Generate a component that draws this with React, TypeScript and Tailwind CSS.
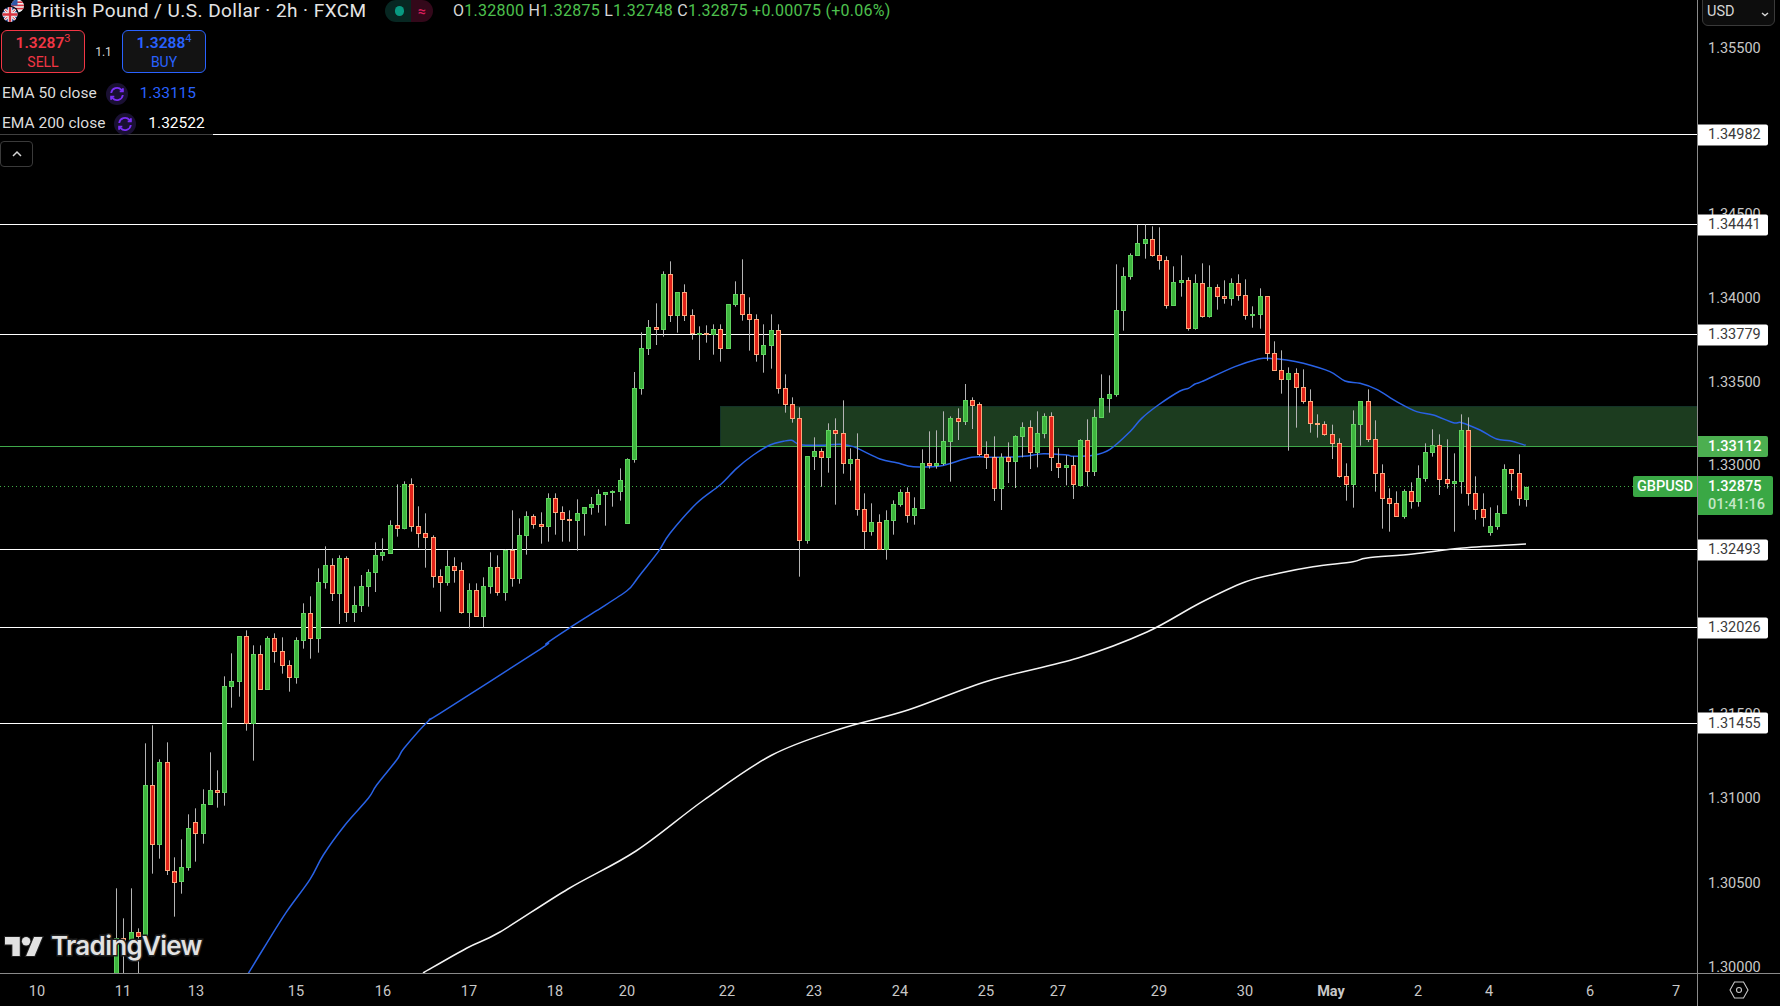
import React from 'react';

// candle rows were read off 3x crops: [x, color, wickTop, bodyTop, bodyBottom, wickBottom]
type Row = [number, 'g' | 'r', number, number, number, number];
type Candle = { x: number; up: boolean; wt: number; bt: number; bb: number; wb: number };

const fromCrop = (ox: number, oy: number, rows: Row[]): Candle[] =>
  rows.map(([x, c, wt, bt, bb, wb]) => ({
    x: ox + x / 3,
    up: c === 'g',
    wt: oy + wt / 3,
    bt: oy + bt / 3,
    bb: oy + bb / 3,
    wb: oy + wb / 3,
  }));

const candles: Candle[] = [
  ...fromCrop(100, 560, [
    [49, 'g', 985, 1135, 1240, 1240],
    [70, 'r', 1075, 1135, 1141, 1240],
    [94, 'g', 985, 1117, 1140, 1165],
    [115, 'r', 1105, 1117, 1130, 1240],
    [136, 'g', 550, 676, 1125, 1125],
    [157, 'r', 496, 676, 854, 941],
    [178, 'g', 598, 607, 854, 896],
    [202, 'r', 547, 607, 932, 945],
    [223, 'r', 892, 932, 965, 1070],
    [244, 'g', 838, 922, 965, 1001],
    [265, 'g', 763, 805, 923, 932],
    [286, 'r', 745, 787, 821, 905],
    [310, 'g', 688, 733, 821, 851],
    [331, 'g', 577, 691, 734, 735],
    [352, 'r', 631, 691, 698, 743],
    [373, 'g', 349, 379, 698, 737],
    [394, 'g', 280, 364, 380, 443],
    [418, 'g', 229, 229, 365, 410],
    [439, 'r', 211, 229, 490, 512],
    [460, 'g', 256, 283, 490, 602],
    [481, 'r', 256, 283, 389, 389],
    [502, 'g', 229, 235, 389, 389],
    [523, 'r', 220, 235, 275, 308],
    [547, 'r', 232, 274, 317, 341],
    [568, 'r', 301, 316, 353, 395],
    [589, 'g', 232, 241, 353, 371],
    [610, 'g', 130, 160, 241, 266],
    [631, 'r', 109, 160, 236, 296],
    [655, 'g', 25, 67, 236, 278],
  ]),
  ...fromCrop(280, 440, [
    [136, 'g', 319, 376, 428, 446],
    [157, 'r', 355, 376, 461, 483],
    [178, 'g', 346, 355, 461, 552],
    [199, 'r', 349, 355, 518, 546],
    [223, 'g', 439, 496, 518, 546],
    [244, 'g', 405, 439, 497, 516],
    [265, 'g', 388, 397, 440, 500],
    [286, 'g', 307, 346, 398, 456],
    [307, 'g', 295, 337, 347, 362],
    [331, 'g', 241, 256, 340, 342],
    [352, 'r', 133, 256, 266, 290],
    [373, 'g', 124, 133, 266, 268],
    [394, 'r', 115, 133, 260, 275],
    [415, 'r', 199, 259, 281, 323],
    [436, 'r', 220, 280, 293, 383],
    [460, 'r', 286, 292, 410, 443],
    [481, 'r', 388, 409, 428, 515],
    [502, 'g', 331, 379, 428, 437],
    [523, 'r', 352, 379, 392, 428],
    [544, 'r', 367, 391, 518, 521],
    [568, 'g', 430, 451, 518, 565],
    [589, 'r', 430, 451, 529, 529],
    [610, 'g', 412, 439, 530, 562],
    [631, 'g', 337, 382, 440, 461],
    [652, 'r', 346, 382, 458, 467],
    [676, 'g', 329, 331, 458, 482],
    [697, 'r', 211, 331, 416, 440],
    [718, 'g', 235, 286, 416, 431],
    [739, 'g', 214, 229, 287, 344],
    [760, 'r', 223, 229, 254, 266],
    [784, 'r', 217, 253, 260, 311],
    [805, 'g', 160, 175, 260, 305],
    [826, 'r', 160, 175, 218, 284],
    [847, 'r', 199, 217, 239, 305],
    [868, 'r', 211, 237, 240, 305],
    [892, 'g', 178, 220, 242, 332],
    [913, 'g', 202, 202, 220, 287],
    [934, 'g', 171, 193, 203, 224],
    [955, 'g', 148, 163, 193, 218],
    [976, 'g', 157, 157, 163, 257],
    [997, 'g', 151, 154, 158, 200],
    [1021, 'g', 85, 121, 155, 182],
    [1042, 'g', 55, 58, 250, 250],
  ]),
  ...fromCrop(620, 240, [
    [43, 'g', 396, 445, 658, 668],
    [64, 'g', 277, 325, 445, 464],
    [85, 'g', 240, 262, 325, 345],
    [109, 'r', 190, 262, 269, 315],
    [130, 'g', 94, 103, 268, 290],
    [151, 'r', 64, 103, 227, 246],
    [172, 'g', 157, 157, 227, 278],
    [193, 'r', 133, 157, 227, 243],
    [217, 'r', 208, 226, 281, 299],
    [238, 'g', 259, 280, 283, 360],
    [259, 'r', 256, 280, 283, 308],
    [280, 'g', 253, 268, 284, 344],
    [301, 'r', 253, 268, 326, 365],
    [325, 'g', 193, 193, 326, 326],
    [346, 'g', 124, 163, 194, 200],
    [367, 'r', 58, 163, 224, 242],
    [388, 'r', 172, 223, 239, 332],
    [409, 'r', 223, 238, 344, 365],
    [430, 'g', 253, 316, 344, 398],
    [454, 'g', 223, 271, 317, 386],
    [475, 'r', 253, 271, 445, 461],
    [496, 'r', 403, 445, 494, 518],
    [517, 'r', 472, 493, 536, 548],
    [538, 'r', 502, 535, 902, 1010],
    [562, 'g', 649, 649, 902, 911],
    [583, 'g', 592, 634, 650, 690],
    [604, 'r', 625, 634, 653, 740],
    [625, 'g', 550, 571, 653, 698],
    [646, 'r', 535, 571, 581, 794],
    [670, 'r', 481, 580, 670, 701],
    [691, 'g', 625, 658, 671, 722],
    [712, 'r', 580, 658, 808, 827],
    [733, 'r', 760, 808, 875, 929],
    [754, 'g', 790, 847, 875, 887],
    [778, 'r', 823, 847, 928, 928],
    [799, 'g', 811, 841, 928, 959],
    [820, 'g', 781, 793, 841, 884],
    [841, 'g', 748, 757, 794, 800],
    [862, 'r', 742, 757, 827, 848],
    [883, 'g', 772, 805, 827, 854],
    [907, 'g', 628, 670, 805, 806],
    [928, 'r', 574, 670, 677, 686],
    [949, 'g', 571, 670, 677, 686],
    [970, 'g', 514, 604, 671, 676],
    [991, 'g', 529, 535, 605, 725],
  ]),
  ...fromCrop(940, 380, [
    [55, 'r', 85, 115, 125, 180],
    [76, 'g', 12, 61, 125, 135],
    [97, 'r', 52, 61, 75, 147],
    [118, 'r', 67, 73, 224, 228],
    [139, 'r', 184, 223, 233, 267],
    [163, 'r', 169, 232, 326, 363],
    [184, 'g', 220, 232, 326, 390],
    [205, 'r', 187, 232, 245, 309],
    [226, 'g', 166, 169, 245, 324],
    [247, 'g', 127, 142, 170, 232],
    [271, 'r', 121, 142, 218, 267],
    [292, 'g', 94, 160, 218, 262],
    [313, 'g', 100, 109, 161, 175],
    [334, 'r', 97, 109, 233, 273],
    [355, 'r', 205, 250, 263, 294],
    [379, 'g', 226, 256, 263, 316],
    [400, 'r', 229, 256, 314, 357],
    [421, 'g', 178, 181, 315, 318],
    [442, 'r', 118, 181, 275, 319],
    [463, 'g', 88, 112, 275, 288],
  ]),
  ...fromCrop(1100, 210, [
    [4, 'g', 493, 565, 623, 623],
    [28, 'g', 496, 553, 566, 608],
    [49, 'g', 163, 301, 554, 560],
    [70, 'g', 172, 199, 301, 362],
    [91, 'g', 130, 136, 200, 209],
    [112, 'g', 44, 100, 137, 137],
    [136, 'g', 44, 88, 101, 146],
    [157, 'r', 49, 88, 136, 140],
    [178, 'r', 52, 136, 151, 179],
    [199, 'r', 139, 151, 287, 296],
    [220, 'g', 169, 217, 287, 287],
    [244, 'g', 136, 211, 217, 260],
    [265, 'r', 202, 211, 356, 362],
    [286, 'g', 193, 220, 356, 359],
    [307, 'r', 160, 220, 320, 323],
    [328, 'g', 166, 232, 320, 323],
    [352, 'r', 223, 232, 260, 299],
    [373, 'r', 211, 259, 265, 281],
    [394, 'g', 205, 220, 266, 287],
    [415, 'r', 193, 220, 257, 272],
    [436, 'r', 208, 256, 317, 329],
    [457, 'g', 289, 313, 316, 353],
    [481, 'g', 235, 259, 314, 356],
    [502, 'r', 259, 259, 431, 452],
    [523, 'r', 394, 430, 482, 482],
    [544, 'r', 421, 481, 509, 551],
    [565, 'g', 472, 490, 509, 722],
    [589, 'r', 475, 490, 533, 653],
    [610, 'r', 478, 532, 575, 581],
    [631, 'r', 538, 574, 640, 668],
    [652, 'r', 613, 640, 644, 683],
    [673, 'r', 634, 643, 674, 677],
  ]),
  ...fromCrop(1280, 380, [
    [157, 'r', 134, 163, 190, 237],
    [178, 'r', 175, 190, 290, 293],
    [199, 'r', 250, 289, 314, 362],
    [220, 'g', 91, 133, 314, 383],
    [241, 'g', 64, 64, 134, 197],
    [265, 'r', 28, 64, 179, 186],
    [286, 'r', 121, 178, 281, 335],
    [307, 'r', 253, 280, 356, 446],
    [328, 'r', 325, 355, 371, 455],
    [349, 'r', 334, 370, 410, 410],
    [373, 'g', 328, 334, 410, 416],
    [394, 'r', 307, 334, 365, 386],
    [415, 'g', 256, 295, 365, 380],
    [436, 'g', 190, 217, 296, 305],
    [457, 'g', 148, 196, 218, 230],
    [478, 'r', 163, 196, 299, 345],
    [502, 'r', 178, 298, 311, 326],
    [523, 'g', 220, 304, 311, 455],
    [544, 'g', 103, 151, 305, 341],
    [565, 'r', 112, 151, 341, 377],
    [586, 'r', 289, 340, 389, 419],
    [610, 'r', 340, 388, 413, 440],
    [631, 'g', 382, 439, 458, 467],
    [652, 'g', 376, 400, 440, 449],
    [673, 'g', 253, 268, 401, 401],
    [694, 'r', 268, 268, 281, 332],
    [718, 'r', 223, 280, 356, 377],
    [739, 'g', 320, 320, 356, 380],
  ]),
];

type Pt = [number, number];

const pts = (ox: number, oy: number, flat: number[]): Pt[] => {
  const out: Pt[] = [];
  for (let i = 0; i < flat.length; i += 2) out.push([ox + flat[i] / 3, oy + flat[i + 1] / 3]);
  return out;
};

// catmull-rom through the read points so the averages don't look faceted
const smooth = (p: Pt[]) => {
  let d = `M${p[0][0]} ${p[0][1]}`;
  for (let i = 0; i < p.length - 1; i++) {
    const a = p[Math.max(i - 1, 0)];
    const b = p[i];
    const c = p[i + 1];
    const e = p[Math.min(i + 2, p.length - 1)];
    const c1x = b[0] + (c[0] - a[0]) / 6;
    const c1y = b[1] + (c[1] - a[1]) / 6;
    const c2x = c[0] - (e[0] - b[0]) / 6;
    const c2y = c[1] - (e[1] - b[1]) / 6;
    d += ` C${c1x} ${c1y} ${c2x} ${c2y} ${c[0]} ${c[1]}`;
  }
  return d;
};

const ema50 = smooth([
  ...pts(100, 560, [445, 1240, 500, 1150, 560, 1055, 630, 958, 670, 885, 735, 795, 805, 715, 830, 675, 890, 600, 912, 565, 985, 483, 1020, 460]),
  ...pts(280, 440, [780, 628, 800, 610, 870, 563, 950, 512, 1040, 453, 1065, 425, 1080, 405]),
  ...pts(620, 240, [115, 935, 150, 880, 230, 790, 300, 735, 350, 685, 400, 645, 450, 615, 490, 604, 515, 601, 540, 614, 600, 616, 660, 613, 700, 620, 780, 657, 830, 668, 880, 680, 960, 678]),
  ...pts(940, 380, [95, 232, 160, 232, 250, 229, 310, 221, 380, 225, 400, 229, 460, 226]),
  ...pts(1100, 210, [30, 718, 90, 665, 125, 625, 175, 585, 240, 543, 265, 535, 285, 522, 305, 515, 405, 470, 475, 447, 500, 445, 560, 450, 610, 460, 690, 485, 735, 513, 780, 520, 830, 538, 890, 575]),
  ...pts(1280, 380, [410, 95, 460, 105, 520, 128, 545, 128, 600, 150, 650, 177, 690, 182, 737, 196]),
]);

const ema200 = smooth([
  [423, 973], [467, 948], [500, 932], [568, 889], [636, 851], [704, 800], [772, 755], [840, 729], [908, 710],
  [988, 681], [1078, 658], [1147, 632], [1200, 603], [1245, 582], [1280, 573], [1313, 566.7], [1353, 561.7], [1367, 558],
  [1413, 554], [1463, 548], [1526, 544],
]);

const levels = [134.5, 224.5, 334.5, 549.5, 627.5, 723.5];
const ticks = [
  { label: '1.35500', y: 48.5 },
  { label: '1.34500', y: 214.5 },
  { label: '1.34000', y: 298.5 },
  { label: '1.33500', y: 382.5 },
  { label: '1.33000', y: 466 },
  { label: '1.31500', y: 715 },
  { label: '1.31000', y: 799 },
  { label: '1.30500', y: 883.5 },
  { label: '1.30000', y: 967.5 },
];
const whiteTags = [
  { label: '1.34982', y: 134.5 },
  { label: '1.34441', y: 224.5 },
  { label: '1.33779', y: 334.5 },
  { label: '1.32493', y: 549.5 },
  { label: '1.32026', y: 627.5 },
  { label: '1.31455', y: 723 },
];
const days = [
  { label: '10', x: 37 },
  { label: '11', x: 123 },
  { label: '13', x: 196 },
  { label: '15', x: 296 },
  { label: '16', x: 383 },
  { label: '17', x: 469 },
  { label: '18', x: 555 },
  { label: '20', x: 627 },
  { label: '22', x: 727 },
  { label: '23', x: 814 },
  { label: '24', x: 900 },
  { label: '25', x: 986 },
  { label: '27', x: 1058 },
  { label: '29', x: 1159 },
  { label: '30', x: 1245 },
  { label: 'May', x: 1331, bold: true },
  { label: '2', x: 1418 },
  { label: '4', x: 1489 },
  { label: '6', x: 1590 },
  { label: '7', x: 1676 },
];

const UP = '#3eb53e';
const DOWN = '#e2231a';
const UP_EDGE = '#5fd35f';
const DOWN_EDGE = '#ffa77a';

function Chart() {
  return (
    <svg width={1697} height={973} className="absolute inset-0 block">
      <rect x={720.5} y={406.5} width={977} height={40} fill="#1c3c1f" stroke="#143328" />
      {levels.map((y) => (
        <line key={y} x1={0} x2={1697} y1={y} y2={y} stroke="#ffffff" strokeWidth={1} />
      ))}
      <line x1={0} x2={1697} y1={446.5} y2={446.5} stroke="#3fa84a" strokeWidth={1} />
      <line x1={0} x2={1633} y1={486.5} y2={486.5} stroke="#3fae46" strokeWidth={1} strokeDasharray="1 3" />
      <path d={ema200} fill="none" stroke="#f4f4f4" strokeWidth={1.5} />
      <path d={ema50} fill="none" stroke="#2962e6" strokeWidth={1.5} />
      {candles.map((c) => {
        const x = Math.round(c.x);
        return (
          <g key={c.x}>
            <line x1={x + 0.5} x2={x + 0.5} y1={c.wt} y2={c.wb} stroke="#b4b4b4" strokeWidth={1} />
            <rect
              x={x - 1.5}
              y={Math.round(c.bt) + 0.5}
              width={4}
              height={Math.max(1, Math.round(c.bb - c.bt))}
              fill={c.up ? UP : DOWN}
              stroke={c.up ? UP_EDGE : DOWN_EDGE}
              strokeWidth={1}
            />
          </g>
        );
      })}
    </svg>
  );
}

function Flags() {
  return (
    <svg width={26} height={22} viewBox="0 0 26 22" className="shrink-0">
      <defs>
        <clipPath id="usClip">
          <circle cx="15.5" cy="6" r="6.5" />
        </clipPath>
        <clipPath id="gbClip">
          <circle cx="8" cy="14.5" r="7.5" />
        </clipPath>
      </defs>
      <g clipPath="url(#usClip)">
        <rect x="8" y="-2" width="16" height="16" fill="#f1f1f1" />
        <rect x="8" y="1.4" width="16" height="1.6" fill="#d8333f" />
        <rect x="8" y="4.6" width="16" height="1.6" fill="#d8333f" />
        <rect x="8" y="7.8" width="16" height="1.6" fill="#d8333f" />
        <rect x="8" y="-2" width="7.5" height="7.5" fill="#2e5aa8" />
      </g>
      <circle cx="8" cy="14.5" r="8.8" fill="#000" />
      <g clipPath="url(#gbClip)">
        <rect x="0" y="7" width="16" height="15" fill="#27408f" />
        <path d="M0 7l16 15M16 7L0 22" stroke="#f1f1f1" strokeWidth="3" />
        <path d="M0 7l16 15M16 7L0 22" stroke="#d8333f" strokeWidth="1" />
        <path d="M8 7v15M0 14.5h16" stroke="#f1f1f1" strokeWidth="4.5" />
        <path d="M8 7v15M0 14.5h16" stroke="#d8333f" strokeWidth="2.4" />
      </g>
    </svg>
  );
}

function LoadSpin() {
  return (
    <span className="flex h-[22px] w-[22px] items-center justify-center rounded-full bg-[#1a1033]">
      <svg width={16} height={16} viewBox="0 0 16 16" fill="none" stroke="#7b2ff7" strokeWidth={1.8}>
        <path d="M2.2 7a5.9 5.9 0 0 1 10.2-3.2L13.8 5.2" />
        <path d="M13.9 2.2v3.2h-3.2" />
        <path d="M13.8 9a5.9 5.9 0 0 1-10.2 3.2L2.2 10.8" />
        <path d="M2.1 13.8v-3.2h3.2" />
      </svg>
    </span>
  );
}

function TradeBox({ price, last, side, tone }: { price: string; last: string; side: string; tone: 'red' | 'blue' }) {
  const red = tone === 'red';
  return (
    <div
      className={`flex h-[43px] w-[84px] flex-col items-center justify-center rounded-[6px] border bg-[#131313] leading-[19px] ${
        red ? 'border-[#f23645] text-[#f23645]' : 'border-[#2962ff] text-[#2962ff]'
      }`}
    >
      <div className="text-[15.5px] leading-[20px] font-semibold">
        {price}
        <sup className="text-[11px] font-normal">{last}</sup>
      </div>
      <div className="text-[14px] leading-[18px]">{side}</div>
    </div>
  );
}

function Legend() {
  return (
    <div className="absolute left-0 top-0 flex flex-col text-[#dcdcdc]">
      <div className="flex h-[22px] items-center">
        <span className="ml-[2px] mr-[2px] flex">
          <Flags />
        </span>
        <span className="w-[355px] text-[19px] leading-[22px] tracking-[0.45px] whitespace-nowrap text-[#e4e4e4]">
          British Pound / U.S. Dollar · 2h · FXCM
        </span>
        <span className="flex h-[22px] w-[48px] overflow-hidden rounded-full">
          <span className="flex w-[26px] items-center justify-center bg-[#072722] pl-[2px]">
            <span className="h-[10px] w-[9px] rounded-full bg-[#089981]" />
          </span>
          <span className="flex flex-1 items-center justify-center bg-[#33081a] text-[14px] font-bold text-[#d81e5b]">≈</span>
        </span>
        <span className="ml-[20px] text-[16px] tracking-[0.25px] whitespace-nowrap text-[#4ec04e]">
          <span className="text-[#d6d6d6]">O</span>1.32800 <span className="text-[#d6d6d6]">H</span>1.32875{' '}
          <span className="text-[#d6d6d6]">L</span>1.32748 <span className="text-[#d6d6d6]">C</span>1.32875 +0.00075 (+0.06%)
        </span>
      </div>
      <div className="mt-[8px] flex items-center">
        <div className="ml-[1px]">
          <TradeBox price="1.3287" last="3" side="SELL" tone="red" />
        </div>
        <span className="w-[37px] text-center text-[12px] text-[#d6d6d6]">1.1</span>
        <TradeBox price="1.3288" last="4" side="BUY" tone="blue" />
      </div>
      <div className="mt-[10px] flex h-[22px] items-center pl-[2px] text-[15.5px]">
        <span>EMA 50 close</span>
        <span className="ml-[9px]">
          <LoadSpin />
        </span>
        <span className="ml-[12px] text-[#2962ff]">1.33115</span>
      </div>
      <div className="mt-[8px] flex h-[23px] items-center self-start bg-black/75 pb-[1px] pl-[2px] pr-[8px] text-[15.5px]">
        <span>EMA 200 close</span>
        <span className="ml-[9px]">
          <LoadSpin />
        </span>
        <span className="ml-[12px] text-white">1.32522</span>
      </div>
      <button className="mt-[5px] flex h-[26px] w-[33px] items-center justify-center rounded-[4px] border border-[#3a3a3a] bg-black">
        <svg width={12} height={8} viewBox="0 0 12 8" fill="none" stroke="#d6d6d6" strokeWidth={1.5}>
          <path d="M2 6l4-4 4 4" />
        </svg>
      </button>
    </div>
  );
}

function Watermark() {
  return (
    <div className="absolute bottom-[11px] left-[5px] flex items-center gap-[8px]">
      <svg width={38} height={19} viewBox="0 4 36 18" className="overflow-visible">
        <g fill="#e2e2e2" stroke="#1f1f1f" strokeWidth={2} paintOrder="stroke">
          <path d="M14 22H7V11H0V4h14v18zM28 22h-8l7.5-18h8L28 22z" />
          <circle cx="20" cy="8" r="4" />
        </g>
      </svg>
      <span className="font-['Inter',sans-serif] text-[26px] leading-[32px] font-semibold tracking-[-0.7px] text-[#e2e2e2] [-webkit-text-stroke:3px_#1f1f1f] [paint-order:stroke_fill]">
        TradingView
      </span>
    </div>
  );
}

function PriceScale() {
  return (
    <div className="relative w-[83px] border-l border-[#8a8a8a] text-[14.5px] text-[#c8c8c8]">
      {ticks.map((t) => (
        <span
          key={t.label}
          className="absolute left-[10px] -translate-y-1/2 leading-[18px]"
          style={{ top: t.y }}
        >
          {t.label}
        </span>
      ))}
      {whiteTags.map((t) => (
        <span
          key={t.label}
          className="absolute left-0 flex h-[21px] w-[70px] -translate-y-1/2 items-center rounded-r-[2px] bg-white pl-[10px] pt-[1px] leading-none text-[#3a3a3a]"
          style={{ top: t.y }}
        >
          {t.label}
        </span>
      ))}
      <span className="absolute left-0 top-[436px] flex h-[21px] w-[70px] items-center rounded-r-[2px] bg-[#4caf50] pl-[10px] pt-[1px] font-medium text-white">
        1.33112
      </span>
      <div className="absolute left-0 top-[476px] flex h-[39px] w-[75px] flex-col rounded-r-[2px] bg-[#3aa845] pl-[10px] leading-[18px] font-medium">
        <span className="mt-[2px] text-white">1.32875</span>
        <span className="text-[#c4e6c6]">01:41:16</span>
      </div>
      <div className="absolute right-[5px] top-[-6px] flex h-[32px] w-[73px] items-end justify-between rounded-[6px] border border-[#3a3a3a] bg-[#0d0d0d] px-[4px] pb-[2px] text-[#d6d6d6]">
        <span>USD</span>
        <svg width={10} height={10} viewBox="0 0 10 10" fill="none" stroke="#d6d6d6" strokeWidth={1.4} className="mb-[4px]">
          <path d="M2 4l3 2.5L8 4" />
        </svg>
      </div>
    </div>
  );
}

export default function App() {
  return (
    <div className="flex h-[1006px] w-[1780px] flex-col overflow-hidden bg-black font-['Roboto',sans-serif]">
      <div className="flex h-[973px]">
        <div className="relative w-[1697px] overflow-hidden">
          <Chart />
          <Legend />
          <Watermark />
          <span className="absolute right-0 top-[476px] flex h-[21px] w-[64px] items-center justify-center rounded-l-[2px] bg-[#3aa845] pt-[1px] text-[14.5px] font-medium text-white">
            GBPUSD
          </span>
        </div>
        <PriceScale />
      </div>
      <div className="flex h-[33px] border-t border-[#8a8a8a]">
        <div className="relative w-[1697px] text-[14.5px] text-[#c8c8c8]">
          {days.map((d) => (
            <span
              key={d.label}
              className={`absolute top-[9px] -translate-x-1/2 leading-[18px] ${d.bold ? 'font-bold' : ''}`}
              style={{ left: d.x }}
            >
              {d.label}
            </span>
          ))}
        </div>
        <div className="flex w-[83px] items-center justify-center border-l border-[#8a8a8a] pr-[1px]">
          <svg width={20} height={18} viewBox="0 0 20 18" fill="none" stroke="#c8c8c8" strokeWidth={1.1}>
            <path d="M1 9l4.5-8h9L19 9l-4.5 8h-9z" />
            <circle cx="10" cy="9" r="2.5" />
          </svg>
        </div>
      </div>
    </div>
  );
}
